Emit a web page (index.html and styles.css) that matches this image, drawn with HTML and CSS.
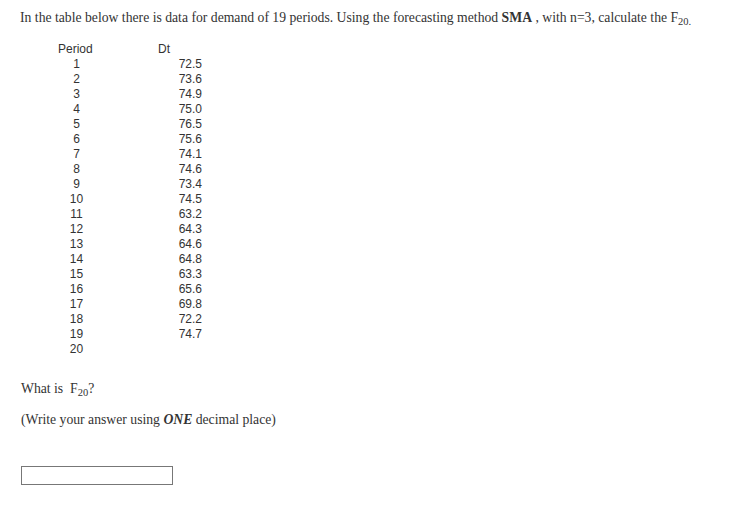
FILE: index.html
```html
<!DOCTYPE html>
<html>
<head>
<meta charset="utf-8">
<link rel="stylesheet" href="styles.css">
</head>
<body>
<div class="page">
  <p class="intro">In the table below there is data for demand of 19 periods. Using the forecasting method <b>SMA</b> , with n=3, calculate the F<sub>20.</sub></p>
  <table class="data">
    <thead><tr><th class="c-p">Period</th><th class="c-d">Dt</th></tr></thead>
    <tbody>
      <tr><td class="c-p">1</td><td class="c-d">72.5</td></tr>
      <tr><td class="c-p">2</td><td class="c-d">73.6</td></tr>
      <tr><td class="c-p">3</td><td class="c-d">74.9</td></tr>
      <tr><td class="c-p">4</td><td class="c-d">75.0</td></tr>
      <tr><td class="c-p">5</td><td class="c-d">76.5</td></tr>
      <tr><td class="c-p">6</td><td class="c-d">75.6</td></tr>
      <tr><td class="c-p">7</td><td class="c-d">74.1</td></tr>
      <tr><td class="c-p">8</td><td class="c-d">74.6</td></tr>
      <tr><td class="c-p">9</td><td class="c-d">73.4</td></tr>
      <tr><td class="c-p">10</td><td class="c-d">74.5</td></tr>
      <tr><td class="c-p">11</td><td class="c-d">63.2</td></tr>
      <tr><td class="c-p">12</td><td class="c-d">64.3</td></tr>
      <tr><td class="c-p">13</td><td class="c-d">64.6</td></tr>
      <tr><td class="c-p">14</td><td class="c-d">64.8</td></tr>
      <tr><td class="c-p">15</td><td class="c-d">63.3</td></tr>
      <tr><td class="c-p">16</td><td class="c-d">65.6</td></tr>
      <tr><td class="c-p">17</td><td class="c-d">69.8</td></tr>
      <tr><td class="c-p">18</td><td class="c-d">72.2</td></tr>
      <tr><td class="c-p">19</td><td class="c-d">74.7</td></tr>
      <tr><td class="c-p">20</td><td class="c-d"></td></tr>
    </tbody>
  </table>
  <div class="question">
    <p class="q">What is &nbsp;F<sub>20</sub>?</p>
    <p class="q">(Write your answer using <b><i>ONE</i></b> decimal place)</p>
    <input class="answer" type="text">
  </div>
</div>
</body>
</html>
```
FILE: styles.css
```css
html, body { margin: 0; padding: 0; background: #fff; }
.page {
  padding: 9px 0 0 20px;
  font-family: "Liberation Serif", "DejaVu Serif", serif;
  font-size: 13.7px;
  color: #333;
}
.intro { margin: 0; line-height: 18px; }
.intro b, .q b { font-weight: bold; }
sub { font-size: 10.5px; vertical-align: -3px; line-height: 0; }
.data {
  margin: 15px 0 0 38px;
  border-collapse: collapse;
  font-family: "Liberation Sans", Arial, sans-serif;
  font-size: 12px;
  color: #333;
}
.data th, .data td { padding: 0; height: 15px; line-height: 15px; }
.data th { font-weight: normal; }
.data th.c-p { text-align: left; width: 100px; }
.data th.c-d { text-align: left; width: 44px; }
.data td.c-p { text-align: center; width: 37px; padding-right: 63px; }
.data td.c-d { text-align: right; }
.question { padding-left: 1px; }
.q { margin: 0; line-height: 18px; }
.q:first-child { margin-top: 23px; }
.q + .q { margin-top: 13px; }
.answer {
  display: block;
  margin-top: 37px;
  width: 152px;
  height: 19px;
  box-sizing: border-box;
  border: 1px solid #777;
  padding: 0;
}
```
